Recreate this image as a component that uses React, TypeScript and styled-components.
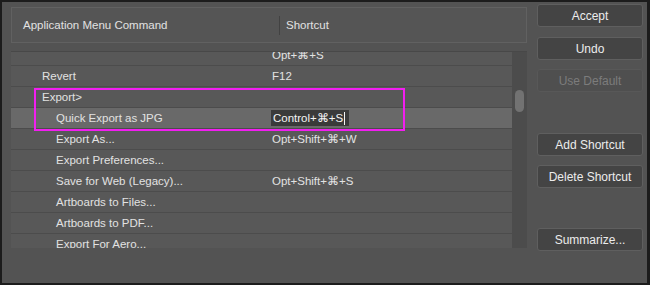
import React, { useLayoutEffect, useRef } from 'react';
import styled, { createGlobalStyle } from 'styled-components';

const Global = createGlobalStyle`
  body {
    margin: 0;
    background: #1c1c1c;
    font-family: "Liberation Sans", Arial, sans-serif;
  }
`;

const Frame = styled.div`
  box-sizing: border-box;
  width: 650px;
  height: 285px;
  display: flex;
  background: #535353;
  border: 2px solid #1c1c1c;
  border-right-width: 3px;
  padding: 2px 0 0 9px;
  overflow: hidden;
`;

const LeftColumn = styled.div`
  width: 516px;
  margin-top: 3px;
  display: flex;
  flex-direction: column;
  gap: 8px;
`;

const Header = styled.div`
  box-sizing: border-box;
  height: 36px;
  display: flex;
  align-items: center;
  background: #555555;
  border: 1px solid #616161;
  color: #e2e2e2;
  font-size: 11.5px;
`;

const HeaderCell = styled.div<{ $width?: number; $pad: number }>`
  box-sizing: border-box;
  padding-left: ${(p) => p.$pad}px;
  ${(p) => (p.$width ? `width: ${p.$width}px;` : 'flex: 1;')}
`;

const HeaderDivider = styled.div`
  width: 1px;
  height: 19px;
  background: #424242;
`;

const List = styled.div`
  position: relative;
  height: 197px;
  display: flex;
  background: #585858;
  border-top: 1px solid #484848;
  box-sizing: border-box;
`;

const Rows = styled.div`
  flex: 1;
  overflow: hidden;
`;

const Row = styled.div<{ $selected?: boolean }>`
  box-sizing: border-box;
  height: 21px;
  display: flex;
  align-items: center;
  border-bottom: 1px solid #4c4c4c;
  background: ${(p) => (p.$selected ? '#696969' : '#585858')};
  color: #e2e2e2;
  font-size: 11.5px;
  white-space: nowrap;
`;

const CommandCell = styled.div<{ $indent: number }>`
  box-sizing: border-box;
  width: 261px;
  padding-left: ${(p) => p.$indent}px;
`;

const ShortcutCell = styled.div`
  flex: 1;
  display: flex;
  align-items: center;
`;

const EditField = styled.div`
  box-sizing: border-box;
  width: 78px;
  height: 16px;
  margin-left: -1px;
  padding-left: 2px;
  display: flex;
  align-items: center;
  background: #3a3a3a;
  color: #f4f4f4;
`;

const Caret = styled.span`
  width: 1px;
  height: 13px;
  margin-left: 1px;
  background: #f4f4f4;
`;

const Track = styled.div`
  width: 15px;
  background: #4c4c4c;
`;

const Thumb = styled.div`
  width: 9px;
  height: 22px;
  margin: 38px 0 0 3px;
  border-radius: 5px;
  background: #727272;
`;

const Highlight = styled.div`
  position: absolute;
  left: 23px;
  top: 36px;
  width: 371px;
  height: 43px;
  box-sizing: border-box;
  border: 2px solid #f21ef0;
  pointer-events: none;
`;

const RightColumn = styled.div`
  width: 106px;
  margin-left: 10px;
  display: flex;
  flex-direction: column;
`;

const Button = styled.button<{ $top: number; $disabled?: boolean }>`
  box-sizing: border-box;
  height: 23px;
  margin-top: ${(p) => p.$top}px;
  padding: 0;
  border: 1px solid ${(p) => (p.$disabled ? '#585858' : '#5f5f5f')};
  border-radius: 3px;
  background: ${(p) => (p.$disabled ? '#4f4f4f' : '#444444')};
  color: ${(p) => (p.$disabled ? '#7c7c7c' : '#ececec')};
  font-family: "Liberation Sans", Arial, sans-serif;
  font-size: 12px;
`;

interface Item {
  command: string;
  shortcut?: string;
  indent: number;
  editing?: boolean;
}

const items: Item[] = [
  { command: '', shortcut: 'Opt+⌘+S', indent: 31 },
  { command: 'Revert', shortcut: 'F12', indent: 31 },
  { command: 'Export>', indent: 31 },
  { command: 'Quick Export as JPG', shortcut: 'Control+⌘+S', indent: 45, editing: true },
  { command: 'Export As...', shortcut: 'Opt+Shift+⌘+W', indent: 45 },
  { command: 'Export Preferences...', indent: 45 },
  { command: 'Save for Web (Legacy)...', shortcut: 'Opt+Shift+⌘+S', indent: 45 },
  { command: 'Artboards to Files...', indent: 45 },
  { command: 'Artboards to PDF...', indent: 45 },
  { command: 'Export For Aero...', indent: 45 },
];

const buttons = [
  { label: 'Accept', top: 0 },
  { label: 'Undo', top: 10 },
  { label: 'Use Default', top: 9, disabled: true },
  { label: 'Add Shortcut', top: 41 },
  { label: 'Delete Shortcut', top: 9 },
  { label: 'Summarize...', top: 40 },
];

export default function App() {
  const rowsRef = useRef<HTMLDivElement>(null);

  useLayoutEffect(() => {
    if (rowsRef.current) rowsRef.current.scrollTop = 7;
  }, []);

  return (
    <>
      <Global />
      <Frame>
        <LeftColumn>
          <Header>
            <HeaderCell $width={267} $pad={11}>
              Application Menu Command
            </HeaderCell>
            <HeaderDivider />
            <HeaderCell $pad={6}>Shortcut</HeaderCell>
          </Header>
          <List>
            <Rows ref={rowsRef}>
              {items.map((item, i) => (
                <Row key={i} $selected={item.editing}>
                  <CommandCell $indent={item.indent}>{item.command}</CommandCell>
                  <ShortcutCell>
                    {item.editing ? (
                      <EditField>
                        {item.shortcut}
                        <Caret />
                      </EditField>
                    ) : (
                      item.shortcut
                    )}
                  </ShortcutCell>
                </Row>
              ))}
            </Rows>
            <Track>
              <Thumb />
            </Track>
            <Highlight />
          </List>
        </LeftColumn>
        <RightColumn>
          {buttons.map((b) => (
            <Button key={b.label} $top={b.top} $disabled={b.disabled}>
              {b.label}
            </Button>
          ))}
        </RightColumn>
      </Frame>
    </>
  );
}
